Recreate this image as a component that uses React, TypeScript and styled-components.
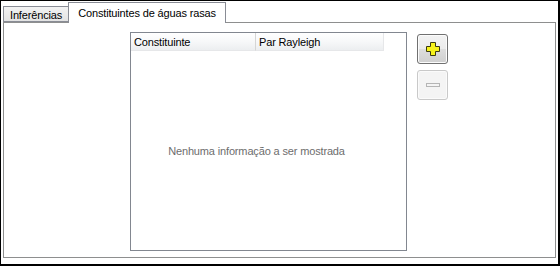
import styled, { createGlobalStyle } from "styled-components";

const GlobalStyle = createGlobalStyle`
  html, body {
    margin: 0;
    padding: 0;
    background: #ffffff;
  }
  body {
    font-family: "Liberation Sans", Arial, sans-serif;
    font-size: 11px;
    letter-spacing: -0.15px;
    color: #000000;
  }
`;

const Frame = styled.div`
  box-sizing: border-box;
  width: 560px;
  height: 266px;
  border-style: solid;
  border-color: #000000;
  border-width: 1px 2px 2px 1px;
  padding: 1px 2px 6px 2px;
  display: flex;
  flex-direction: column;
  background: #ffffff;
`;

const TabBar = styled.div`
  display: flex;
  align-items: flex-end;
  height: 20px;
  position: relative;
  z-index: 1;
`;

const Tab = styled.div<{ $active?: boolean }>`
  box-sizing: border-box;
  display: flex;
  align-items: center;
  padding: 0 ${(p) => (p.$active ? "9px" : "6px")};
  height: ${(p) => (p.$active ? "21px" : "16px")};
  margin-bottom: ${(p) => (p.$active ? "-1px" : "0")};
  padding-top: ${(p) => (p.$active ? "0" : "1px")};
  border: 1px solid #898c95;
  border-bottom: ${(p) => (p.$active ? "none" : "1px solid #898c95")};
  margin-left: ${(p) => (p.$active ? "-1px" : "0")};
  background: ${(p) =>
    p.$active ? "#ffffff" : "linear-gradient(#f2f2f2, #e3e3e3)"};
  white-space: nowrap;
`;

const Pane = styled.div`
  flex: 1;
  box-sizing: border-box;
  border: 1px solid #8e8f8f;
  display: flex;
  align-items: flex-start;
  gap: 10px;
  padding: 9px 0 0 126px;
`;

const Table = styled.div`
  box-sizing: border-box;
  width: 277px;
  height: 219px;
  border: 1px solid #828790;
  display: flex;
  flex-direction: column;
`;

const HeaderRow = styled.div`
  display: flex;
  height: 18px;
`;

const HeaderCell = styled.div<{ $width: number; $last?: boolean }>`
  box-sizing: border-box;
  width: ${(p) => p.$width}px;
  display: flex;
  align-items: center;
  padding-left: 3px;
  background: linear-gradient(#ffffff 0%, #f7f8f9 50%, #eceef0 100%);
  border-right: 1px solid ${(p) => (p.$last ? "#e6e7e9" : "#d5d5d5")};
  border-bottom: 1px solid #e6e7e9;
`;

const EmptyBody = styled.div`
  flex: 1;
  display: flex;
  align-items: center;
  justify-content: center;
  padding-right: 24px;
  color: #6d6d6d;
`;

const ButtonColumn = styled.div`
  display: flex;
  flex-direction: column;
  gap: 6px;
  margin-top: 2px;
`;

const IconButton = styled.button<{ $disabled?: boolean }>`
  box-sizing: border-box;
  width: 31px;
  height: 30px;
  padding: 0;
  border-radius: 3px;
  display: flex;
  align-items: center;
  justify-content: center;
  border: 1px solid ${(p) => (p.$disabled ? "#c9c9c9" : "#707070")};
  background: ${(p) =>
    p.$disabled
      ? "#f4f4f4"
      : "linear-gradient(#f2f2f2 0%, #ebebeb 50%, #dddddd 51%, #cfcfcf 100%)"};
  box-shadow: inset 0 0 0 1px ${(p) => (p.$disabled ? "#fbfbfb" : "#fcfcfc")};
`;

function PlusIcon() {
  return (
    <svg width="16" height="16" viewBox="0 0 16 16">
      <path
        d="M5.5 1.5h5v4h4v5h-4v4h-5v-4h-4v-5h4z"
        fill="#f6f21a"
        stroke="#3a3a10"
        strokeWidth="1"
      />
    </svg>
  );
}

function MinusIcon() {
  return (
    <svg width="16" height="16" viewBox="0 0 16 16">
      <rect x="1.5" y="6.5" width="13" height="3" fill="#f4f4f4" stroke="#b5b5b5" />
    </svg>
  );
}

export default function App() {
  return (
    <>
      <GlobalStyle />
      <Frame>
        <TabBar>
          <Tab>Inferências</Tab>
          <Tab $active>Constituintes de águas rasas</Tab>
        </TabBar>
        <Pane>
          <Table>
            <HeaderRow>
              <HeaderCell $width={125}>Constituinte</HeaderCell>
              <HeaderCell $width={128} $last>
                Par Rayleigh
              </HeaderCell>
            </HeaderRow>
            <EmptyBody>Nenhuma informação a ser mostrada</EmptyBody>
          </Table>
          <ButtonColumn>
            <IconButton>
              <PlusIcon />
            </IconButton>
            <IconButton $disabled disabled>
              <MinusIcon />
            </IconButton>
          </ButtonColumn>
        </Pane>
      </Frame>
    </>
  );
}
